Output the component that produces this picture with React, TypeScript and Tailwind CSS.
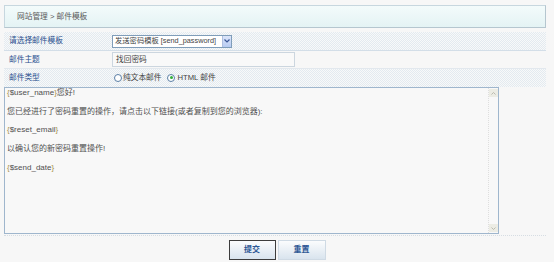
const FONT = "font-['Liberation_Sans','Noto_Sans_CJK_SC',sans-serif]";

function Radio({ checked }: { checked?: boolean }) {
  return (
    <span className="w-[8px] h-[8px] rounded-full border border-[#5b7fa6] bg-white flex items-center justify-center">
      {checked && <span className="w-[3px] h-[3px] rounded-full bg-[#2fae3a]" />}
    </span>
  );
}

function Var({ name }: { name: string }) {
  return (
    <span>
      <span className="text-[#a8904a]">{"{"}</span>
      {name}
      <span className="text-[#a8904a]">{"}"}</span>
    </span>
  );
}

export default function App() {
  const dotted =
    "bg-[repeating-conic-gradient(#e3eaf0_0_25%,#f8f9f9_0_50%)] bg-[length:2px_2px]";

  return (
    <div className={`w-[554px] h-[262px] bg-[#f7f7f7] pt-[5px] pl-[4px] text-[7.7px] ${FONT}`}>
      {/* breadcrumb */}
      <div className="w-[542px] h-[23px] border border-[#c7d7df] border-r-[#b5c6cf] border-b-[#b5c6cf] bg-gradient-to-b from-[#f3fbfb] to-[#e4f3f4] flex items-center pl-[12px] text-[#5a5a5a]">
        网站管理 &gt; 邮件模板
      </div>

      {/* form rows */}
      <div className="w-[542px] mt-[4px]">
        <div className={`h-[19px] flex items-center border-b border-[#d3dee8] ${dotted}`}>
          <div className="w-[108px] pl-[5px] text-[#2a4f8e]">请选择邮件模板</div>
          <div className="h-[13px] w-[120px] border border-[#7f9db9] bg-white flex items-center">
            <span className="flex-1 pl-[2px] text-[7.3px] text-[#444] whitespace-nowrap">
              发送密码模板 [send_password]
            </span>
            <span className="w-[9px] h-[11px] bg-gradient-to-b from-[#dce6fa] to-[#b7cbf2] border-l border-[#aebfe0] flex items-center justify-center">
              <svg width="6" height="4" viewBox="0 0 6 4">
                <path d="M0.5 0.5 L3 3 L5.5 0.5" fill="none" stroke="#3a5696" strokeWidth="1.2" />
              </svg>
            </span>
          </div>
        </div>

        <div className="h-[18px] flex items-center border-b border-[#e2e8ee]">
          <div className="w-[108px] pl-[5px] text-[#2a4f8e]">邮件主题</div>
          <div className="h-[15px] w-[183px] border border-[#ccd6df] bg-[#f9f9f9] flex items-center pl-[3px] text-[#444]">
            找回密码
          </div>
        </div>

        <div className={`h-[18px] flex items-center ${dotted}`}>
          <div className="w-[110px] pl-[5px] text-[#2a4f8e]">邮件类型</div>
          <div className="flex items-center text-[#444]">
            <Radio />
            <span className="ml-[1px]">纯文本邮件</span>
            <span className="ml-[6px]">
              <Radio checked />
            </span>
            <span className="ml-[2px]">HTML 邮件</span>
          </div>
        </div>
      </div>

      {/* message body */}
      <div className="w-[495px] h-[147px] border border-[#9fb6cd] bg-[#f8f8f8] flex">
        <div className="flex-1 pl-[2px] pt-0 text-[8px] leading-[9.35px] text-[#505050]">
          <p><Var name="$user_name" />您好!</p>
          <p>&nbsp;</p>
          <p>您已经进行了密码重置的操作，请点击以下链接(或者复制到您的浏览器):</p>
          <p>&nbsp;</p>
          <p><Var name="$reset_email" /></p>
          <p>&nbsp;</p>
          <p>以确认您的新密码重置操作!</p>
          <p>&nbsp;</p>
          <p><Var name="$send_date" /></p>
        </div>
        <div className="w-[10px] border-l border-dotted border-[#dedede] flex flex-col justify-between items-center py-[1px]">
          <span className="w-[9px] h-[8px] bg-[#ecece4] flex items-center justify-center">
            <svg width="5" height="3" viewBox="0 0 5 3">
              <path d="M0.5 2.5 L2.5 0.5 L4.5 2.5" fill="none" stroke="#b5b5a8" strokeWidth="0.9" />
            </svg>
          </span>
          <span className="w-[9px] h-[8px] bg-[#ecece4] flex items-center justify-center">
            <svg width="5" height="3" viewBox="0 0 5 3">
              <path d="M0.5 0.5 L2.5 2.5 L4.5 0.5" fill="none" stroke="#b5b5a8" strokeWidth="0.9" />
            </svg>
          </span>
        </div>
      </div>
      <div className="w-[542px] h-[2px] border-b border-dotted border-[#d6dde3]" />

      {/* actions */}
      <div className="w-[546px] flex justify-center gap-[2px] mt-[4px]">
        <button className="w-[47px] h-[20px] border border-[#3d3d3d] bg-gradient-to-b from-[#fbfcfd] to-[#d9e4ee] text-[#2d5895] font-bold text-[8px]">
          提交
        </button>
        <button className="w-[48px] h-[20px] border border-[#cfdae4] bg-gradient-to-b from-[#fbfcfd] to-[#d9e4ee] text-[#2d5895] font-bold text-[8px]">
          重置
        </button>
      </div>
    </div>
  );
}
